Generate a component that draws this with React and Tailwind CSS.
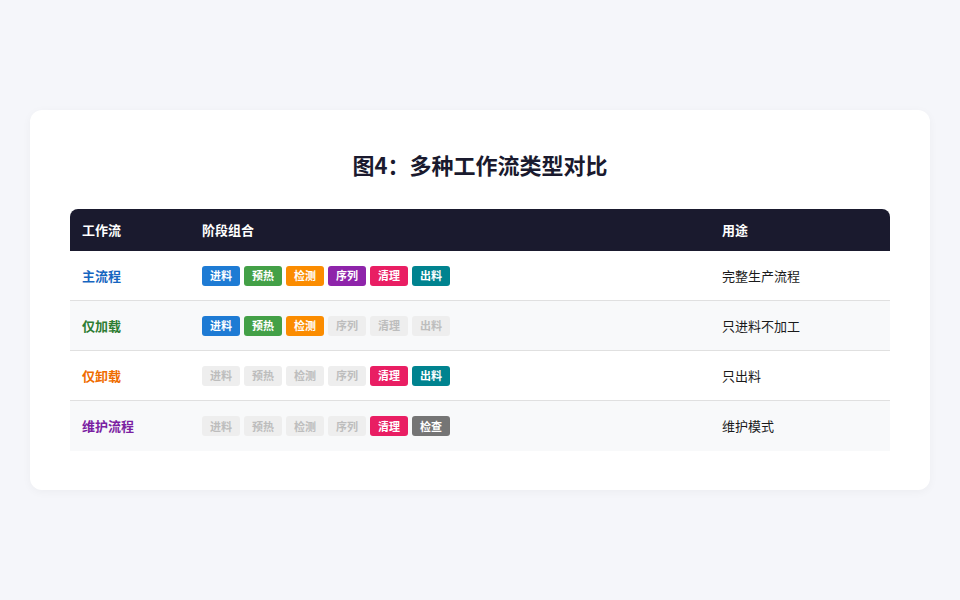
const F = { fontFamily: '"Noto Sans CJK SC", "Noto Sans", sans-serif' };

const STAGES = [
  ["进料", "bg-[#1e7bd4]"],
  ["预热", "bg-[#43a047]"],
  ["检测", "bg-[#fb8c00]"],
  ["序列", "bg-[#8e24aa]"],
  ["清理", "bg-[#e91e63]"],
  ["出料", "bg-[#00838f]"],
];

const rows = [
  { name: "主流程", color: "text-[#1565c0]", on: [0, 1, 2, 3, 4, 5], use: "完整生产流程", bg: "bg-white" },
  { name: "仅加载", color: "text-[#2e7d32]", on: [0, 1, 2], use: "只进料不加工", bg: "bg-[#f8f9fa]" },
  { name: "仅卸载", color: "text-[#ef6c00]", on: [4, 5], use: "只出料", bg: "bg-white" },
  { name: "维护流程", color: "text-[#7b1fa2]", on: [4], check: true, use: "维护模式", bg: "bg-[#f8f9fa]" },
];

function Badge({ label, cls, active }) {
  return (
    <span
      className={`w-[38px] h-[20px] rounded-[3px] flex items-center justify-center text-[11px] font-bold ${
        active ? `${cls} text-white` : "bg-[#eeeeee] text-[#bdbdbd]"
      }`}
    >
      {label}
    </span>
  );
}

export default function App() {
  return (
    <div className="w-[960px] h-[600px] bg-[#f5f6fa] pt-[110px] px-[30px]" style={F}>
      <div className="bg-white rounded-xl h-[380px] px-10 pt-[38px] shadow-[0_2px_10px_rgba(0,0,0,0.04)]">
        <h1 className="text-center text-[22px] font-bold text-[#1a1a2e] leading-[32px]">图4：多种工作流类型对比</h1>
        <div className="mt-[29px] rounded-t-lg overflow-hidden">
          <div className="flex h-[42px] items-center bg-[#1a1a2e] text-white text-[13px] font-bold">
            <div className="w-[120px] pl-3">工作流</div>
            <div className="w-[520px] pl-3">阶段组合</div>
            <div className="pl-3">用途</div>
          </div>
          {rows.map((r, i) => (
            <div
              key={r.name}
              className={`flex h-[50px] items-center text-[13px] ${r.bg} ${i < 3 ? "border-b border-[#e0e0e0]" : ""}`}
            >
              <div className={`w-[120px] pl-3 font-bold ${r.color}`}>{r.name}</div>
              <div className="w-[520px] pl-3 flex gap-1">
                {STAGES.map(([l, c], j) =>
                  r.check && j === 5 ? (
                    <Badge key={j} label="检查" cls="bg-[#757575]" active />
                  ) : (
                    <Badge key={j} label={l} cls={c} active={r.on.includes(j)} />
                  )
                )}
              </div>
              <div className="pl-3 text-[#1a1a1a]">{r.use}</div>
            </div>
          ))}
        </div>
      </div>
    </div>
  );
}
